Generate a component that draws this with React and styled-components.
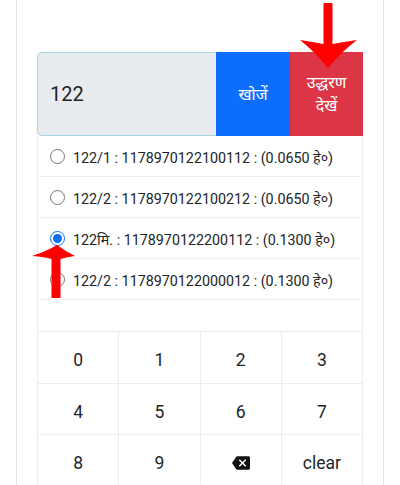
import React, { useState } from "react";
import styled, { createGlobalStyle } from "styled-components";

const GlobalStyle = createGlobalStyle`
  html, body { margin: 0; padding: 0; background: #ffffff; }
  body { font-family: Roboto, "Noto Sans", "Liberation Sans", sans-serif; color: #212529; }
  * { box-sizing: border-box; }
`;

const Page = styled.div`
  position: relative;
  width: 400px;
  height: 485px;
  overflow: hidden;
  padding: 0 16px;
`;

const Card = styled.div`
  height: 100%;
  border-left: 1px solid #e4e4e4;
  border-right: 1px solid #e4e4e4;
  padding: 52px 20px 0;
`;

const InputGroup = styled.div`
  display: flex;
  height: 84px;
`;

const SearchInput = styled.input`
  flex: 1;
  min-width: 0;
  background: #e9ecef;
  border: 1px solid #a9d4e4;
  border-right: none;
  border-radius: 5px 0 0 5px;
  padding: 0 12px;
  font-family: Roboto, "Noto Sans", sans-serif;
  font-size: 20px;
  color: #212529;
  outline: none;
`;

const ActionButton = styled.button`
  width: ${(p) => p.$w}px;
  flex: none;
  border: none;
  background: ${(p) => p.$bg};
  color: #ffffff;
  font-family: Roboto, "Noto Sans", sans-serif;
  font-size: 16px;
  line-height: 23px;
  padding: 0 4px;
  text-align: center;
`;

const ResultBox = styled.div`
  border-left: 1px solid #ececec;
  border-right: 1px solid #ececec;
  padding: 0 2px 31px;
`;

const Item = styled.label`
  display: flex;
  align-items: center;
  gap: 8px;
  height: 41px;
  padding: 0 0 0 10px;
  border-bottom: 1px solid #ececec;
  font-size: 14.3px;
  color: #212529;
  white-space: nowrap;
`;

const ItemText = styled.span`
  padding-top: 2px;
`;

const Radio = styled.input`
  width: 15px;
  height: 15px;
  margin: 0;
  accent-color: #0b6ef5;
  flex: none;
`;

const Keypad = styled.div`
  display: grid;
  grid-template-columns: repeat(4, 1fr);
  border-top: 1px solid #ececec;
  border-left: 1px solid #ececec;
`;

const Key = styled.button`
  height: 51.5px;
  border: none;
  border-right: 1px solid #ececec;
  border-bottom: 1px solid #ececec;
  background: #ffffff;
  display: flex;
  align-items: center;
  justify-content: center;
  font-family: Roboto, "Noto Sans", sans-serif;
  font-size: 17.5px;
  color: #212529;
  padding: 6px 0 0;
`;

const Arrow = styled.svg`
  position: absolute;
  left: 0;
  top: 0;
  pointer-events: none;
`;

const items = [
  "122/1 : 1178970122100112 : (0.0650 हे०)",
  "122/2 : 1178970122100212 : (0.0650 हे०)",
  "122मि. : 1178970122200112 : (0.1300 हे०)",
  "122/2 : 1178970122000012 : (0.1300 हे०)",
];

const BackspaceIcon = () => (
  <svg width="18" height="18" viewBox="0 0 24 24" aria-hidden="true">
    <path
      fill="#111"
      d="M22 3H7c-.69 0-1.23.35-1.59.88L0 12l5.41 8.11c.36.53.9.89 1.59.89h15c1.1 0 2-.9 2-2V5c0-1.1-.9-2-2-2zm-3 12.59L17.59 17 14 13.41 10.41 17 9 15.59 12.59 12 9 8.41 10.41 7 14 10.59 17.59 7 19 8.41 15.41 12 19 15.59z"
    />
  </svg>
);

export default function App() {
  const [selected, setSelected] = useState(2);
  const keys = ["0", "1", "2", "3", "4", "5", "6", "7", "8", "9", "back", "clear"];
  return (
    <>
      <GlobalStyle />
      <Page>
        <Card>
          <InputGroup>
            <SearchInput defaultValue="122" />
            <ActionButton $w={74} $bg="#0d6efd">खोजें</ActionButton>
            <ActionButton $w={73} $bg="#dc3545">
              उद्धरण
              <br />
              देखें
            </ActionButton>
          </InputGroup>
          <ResultBox>
            {items.map((t, i) => (
              <Item key={i}>
                <Radio
                  type="radio"
                  name="khasra"
                  checked={selected === i}
                  onChange={() => setSelected(i)}
                />
                <ItemText>{t}</ItemText>
              </Item>
            ))}
          </ResultBox>
          <Keypad>
            {keys.map((k) => (
              <Key key={k}>{k === "back" ? <BackspaceIcon /> : k}</Key>
            ))}
          </Keypad>
        </Card>
        <Arrow width="400" height="485" viewBox="0 0 400 485">
          <path
            fill="#ff0000"
            d="M323.5,3 L332.5,3 L332.5,44 Q343,42 357,40 Q341,52 328,68 Q315,52 300,40 Q313,42 323.5,44 Z"
          />
          <path
            fill="#ff0000"
            d="M57,245 Q65,251 75,256 Q67,257 60.5,259 L60.5,298 L51.5,298 L51.5,259 Q45,257 32,256 Q47,251 57,245 Z"
          />
        </Arrow>
      </Page>
    </>
  );
}
